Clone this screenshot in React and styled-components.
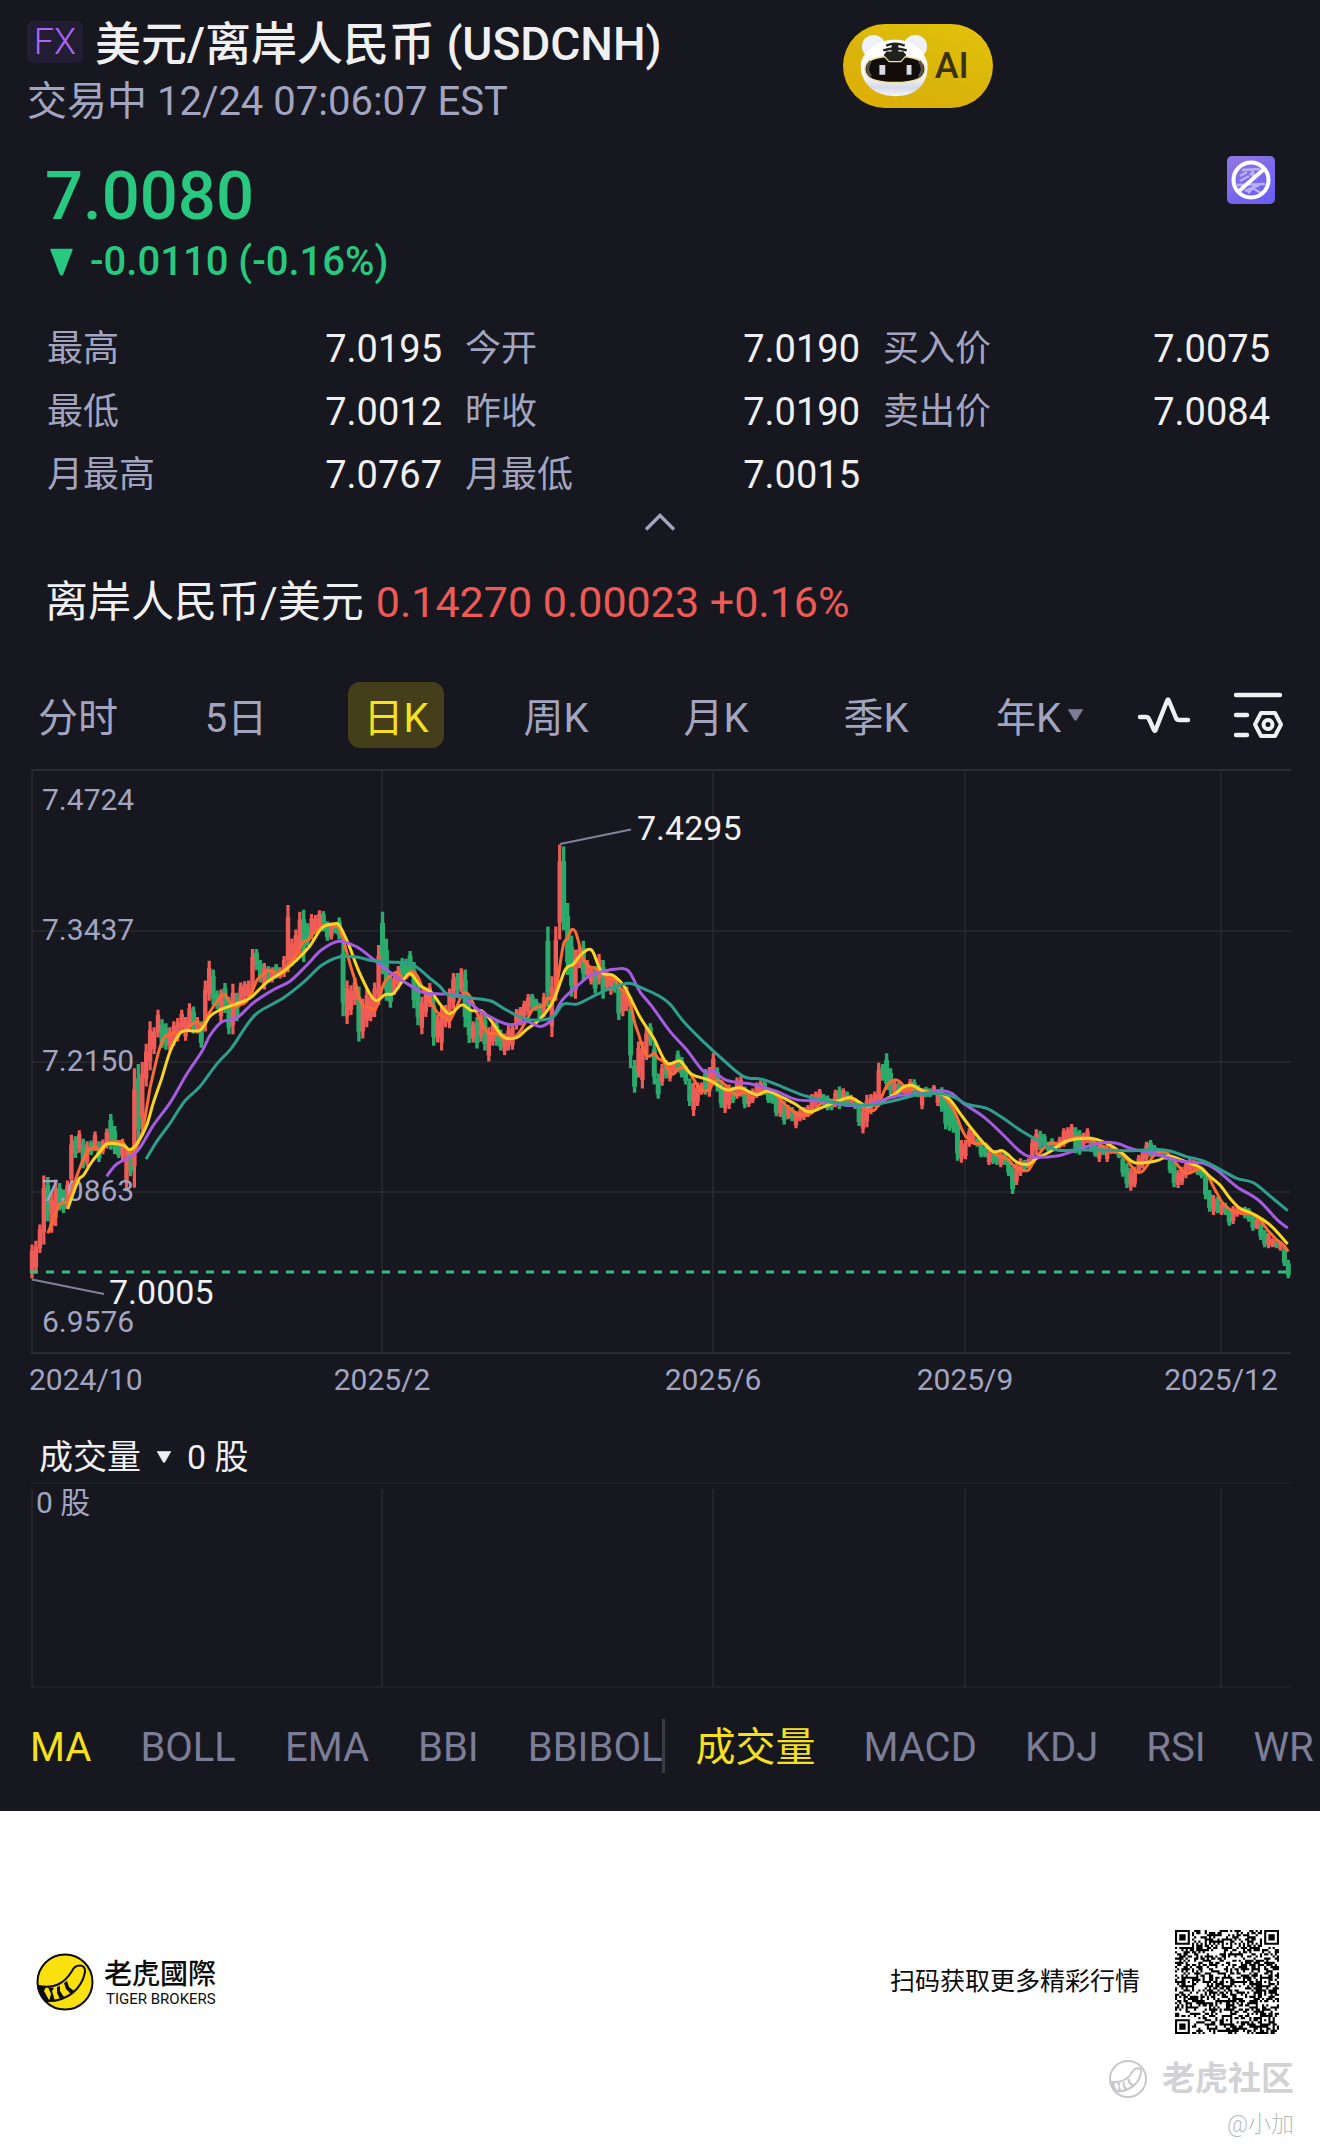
import React from "react";
import styled, { createGlobalStyle } from "styled-components";

const GlobalStyle = createGlobalStyle`
  *, *::before, *::after { box-sizing: border-box; }
  body {
    margin: 0;
    background: #ffffff;
    font-family: Roboto, "Noto Sans CJK SC", sans-serif;
  }
  button, select { font: inherit; color: inherit; background: none; border: 0; padding: 0; margin: 0; cursor: pointer; }
  h1, h2, p, dl, dd, dt { margin: 0; font-weight: inherit; font-size: inherit; }
`;

const color = {
  bg: "#16171f",
  text: "#f0f0f2",
  muted: "#a3a5c0",
  dim: "#7c7d96",
  up: "#ee5a55",
  down: "#28c880",
  candleUp: "#ef5b56",
  candleDown: "#2aab6c",
  accent: "#f7e01e",
  grid: "#2a2b30",
  faint: "#1e1f27",
};

/* ---------- Layout ---------- */

const Screen = styled.main`
  background: ${color.bg};
  color: ${color.text};
  padding: 15px 0 38px;
  overflow: hidden;
`;

const Header = styled.header`
  display: grid;
  grid-template-columns: 815fr 449fr;
  padding: 0 28px 0 27px;
`;

const TitleRow = styled.div`
  display: flex;
  align-items: center;
  gap: 12px;
`;

const MarketBadge = styled.span`
  width: 56px;
  height: 42px;
  margin-bottom: 4px;
  border-radius: 6px;
  background: #231d34;
  color: #a966f2;
  font-size: 36px;
  font-weight: 300;
  line-height: 42px;
  text-align: center;
`;

const Title = styled.h1`
  font-size: 46px;
  font-weight: 500;
  line-height: 58px;
  white-space: nowrap;
`;

const Status = styled.p`
  color: ${color.muted};
  font-size: 40px;
  line-height: 58px;
  white-space: nowrap;
`;

const AiButton = styled.button`
  display: flex;
  align-items: center;
  gap: 6px;
  width: 150px;
  height: 84px;
  margin-top: 9px;
  padding-left: 16px;
  border-radius: 42px;
  background: linear-gradient(20deg, #dfae08 0%, #d9b40a 45%, #e3c40c 100%);
  color: #3b3113;
  font-size: 36px;
  font-weight: 500;
`;

const Quote = styled.section`
  display: flex;
  justify-content: space-between;
  align-items: flex-start;
  padding: 25px 45px 0;
  color: ${color.down};
  font-weight: 500;
`;

const Price = styled.p`
  font-size: 67px;
  line-height: 80px;
`;

const Change = styled.p`
  display: flex;
  align-items: center;
  gap: 16px;
  padding-left: 4px;
  font-size: 40px;
  line-height: 52px;
`;

const IconButton = styled.button`
  display: block;
  line-height: 0;
`;

const Stats = styled.dl`
  display: grid;
  grid-template-columns: 395fr 395fr 387fr;
  column-gap: 23px;
  padding: 30px 50px 0 47px;
`;

const Stat = styled.div`
  display: flex;
  justify-content: space-between;
  line-height: 63px;
`;

const StatLabel = styled.dt`
  color: ${color.muted};
  font-size: 36px;
`;

const StatValue = styled.dd`
  font-size: 38px;
`;

const Collapse = styled.button`
  display: flex;
  align-items: center;
  justify-content: center;
  width: 100%;
  height: 30px;
`;

const CrossPair = styled.p`
  margin-top: 35px;
  padding: 0 45px;
  font-size: 43px;
  line-height: 60px;
  white-space: nowrap;
`;

const Rise = styled.span`
  margin-left: 12px;
  color: ${color.up};
`;

const Periods = styled.nav`
  display: grid;
  grid-template-columns: 156fr repeat(5, 160fr) 168fr 80fr 108fr;
  align-items: center;
  justify-items: center;
  height: 66px;
  margin-top: 50px;
  padding-right: 8px;
`;

const Period = styled.button`
  display: flex;
  align-items: center;
  gap: 6px;
  height: 66px;
  padding: 0 15px;
  border-radius: 12px;
  background: ${(p) => (p.$active ? "#443e1b" : "transparent")};
  color: ${(p) => (p.$active ? color.accent : color.muted)};
  font-size: 40px;
`;

const Plot = styled.svg`
  display: block;
  width: 100%;
  height: auto;
  margin-top: ${(p) => p.$gap || 0}px;
`;

const VolumeHead = styled.div`
  display: flex;
  align-items: center;
  gap: 15px;
  margin-top: 22px;
  padding: 0 39px;
  font-size: 34px;
  line-height: 50px;
`;

const VolumeSelect = styled.select`
  appearance: none;
  line-height: 50px;
`;

const Indicators = styled.nav`
  display: grid;
  grid-template-columns: 1fr 1fr;
  margin-top: 29px;
`;

const IndicatorGroup = styled.div`
  display: flex;
  gap: ${(p) => p.$gap}px;
  padding-left: 30px;
  border-left: ${(p) => (p.$divided ? "3px solid #3b3c43" : "0")};
  height: 54px;
`;

const Indicator = styled.button`
  flex: none;
  color: ${(p) => (p.$active ? color.accent : color.dim)};
  font-size: 40px;
  line-height: 58px;
`;

const Footer = styled.footer`
  padding: 119px 26px 0 36px;
  color: #0c0c0c;
`;

const FooterRow = styled.div`
  display: flex;
  align-items: center;
  padding-right: 15px;
`;

const Brand = styled.div`
  display: flex;
  align-items: center;
  gap: 10px;
  margin-right: auto;
`;

const BrandName = styled.p`
  font-family: "Noto Sans CJK TC", sans-serif;
  font-size: 28px;
  font-weight: 500;
  line-height: 34px;
`;

const BrandLatin = styled.p`
  padding-left: 2px;
  font-size: 15px;
  line-height: 20px;
`;

const Slogan = styled.p`
  margin-right: 35px;
  font-size: 25px;
  line-height: 36px;
`;

const Watermark = styled.div`
  display: flex;
  align-items: center;
  justify-content: flex-end;
  gap: 15px;
  margin-top: 22px;
  color: #d2d2d6;
  font-size: 33px;
  font-weight: 700;
  line-height: 46px;
`;

const Author = styled.p`
  color: #bcbcc0;
  font-size: 23px;
  font-weight: 300;
  line-height: 34px;
  margin-top: 6px;
  padding-bottom: 12px;
  text-align: right;
`;

/* ---------- Chart data: [top, bottom, direction] for each trading day ---------- */

const PITCH = 11.815;

const parse = (s) =>
  s.trim().split(/\s+/).map((t) => {
    const [a, b] = t.slice(0, -1).split("-").map(Number);
    return { top: a, bottom: b, up: t.endsWith("r") };
  });

const early = parse(`
1187-1270r 1178-1258r 1138-1208r 1018-1187r 1022-1130g 1060-1158r 1028-1142r 1036-1104g 1052-1110g 1030-1100r
918-1050r 922-975g 907-962r 928-1000g 934-996r 932-968g 910-958r 934-985g 930-966r 903-952r
867-955g 897-966g 938-975g 928-980r 950-1052r 952-1020g 755-1048r 745-940g 740-905r 695-800r
640-760r 655-720r 612-680r 635-705g 645-710g 655-712r 640-700r 632-690r 612-665r 630-688r
596-665r 604-670g 630-670r 640-705g 540-665r 492-590r 513-600g 565-610g 562-642r 546-620g
580-672g 548-672r 570-640g 545-600r 542-588r 540-588r 463-570r 463-515g 490-545g 497-562r
505-545g 508-545r 500-535g 508-535r 480-532r 355-520r 437-505r 415-495r 372-480r 367-495g
400-455g 377-440r 380-425r 368-415r 370-420g 395-443g 398-440r 398-425g 386-440g 440-628g
540-647r 552-625r 533-600r 555-690g 585-682r 560-655r 580-640r 545-630r 453-600r 372-525g
438-590g 530-607g 525-575r 505-560r 485-535g 487-530g 468-530g 495-608g 535-650g 580-672r
562-630r 546-605r 580-700g 625-692r 600-712r 600-655r 560-657r 522-610r 522-575g 510-570r
513-655g 590-693g 640-692r 630-707g 610-690r 620-712g 655-739r 640-700r 640-700g 660-712g
670-723r 650-712r 645-710r 610-660r 605-650r 590-635r 573-625r 573-610g 585-615g 595-640g
570-630r 408-605g 530-679r 408-590r 207-440r 212-417g 350-527g 430-580g 465-585r 453-510r
443-540g 490-535r 505-550r 505-572g 475-550r 490-585g 520-562r 525-575r 530-570g 550-637g
560-628r 555-615r 580-755g 735-815g 690-778r 690-805r 655-735r 645-700g 690-795g 768-830g
745-798r 735-780g 740-788r 740-768r 712-765g 728-778g 750-795g 780-848g 790-872r 790-848r
790-820r 757-820g 752-825r 718-795r 753-812g 790-852g 800-865r 795-855r 800-840g 778-830r
775-825r 800-853g 810-850r 805-840r 790-828r 785-822r 785-820g 805-840g 815-842g 820-873g
825-875r 835-893g 845-880r 850-885g 860-902r 855-885r 850-882r 845-875r 818-868r 812-850r
806-840r 818-845g 822-858g 830-858g 808-850r 800-855g 804-840r 812-850g 820-850r 828-855g
840-897g 850-915r 820-900r 818-868r 812-850r`);

const late = parse(`
308-440r 312-362g 280-390g 325-405g 360-415r 368-410g 375-400r 372-408r 357-405r 358-405g
375-412g 385-448r 380-412g 385-412g 375-405r 388-438r 382-455g 410-508g 430-512g 445-518g
480-602g 540-608r 540-598r 505-560r 512-548r 535-560g 545-592g 560-592g 570-615r 572-612g
570-615g 575-622r 575-615g 595-648g 620-702g 610-675r 595-648r 600-630g 595-625r 535-615r
508-585r 512-570g 522-560g 545-575g 535-575g 545-570r 530-565r 505-560r 502-545r 492-540r
502-580g 510-584g 518-560r 505-550r 530-575g 550-590g 550-606r 555-585g 555-606r 560-582r
565-582g 570-595g 585-650g 610-684g 625-692r 620-682r 585-640r 570-625r 545-605r 540-590g
555-590g 565-590r 570-590g 580-600g 590-640g 605-682g 630-684r 620-675r 605-655r 595-640r
600-630r 615-645g 620-655g 640-718g 690-755g 705-765r 710-760g 730-765r 728-765g 745-797g
738-792r 740-770r 745-765r 740-775g 745-785g 760-812g 775-808r 785-840g 810-862g 820-865r
835-862r 840-865g 845-872r 860-918g 900-955g`);

const yEarly = (v) => 760 + v / 2.45;
const yLate = (v) => 960 + v / 3;

const candles = [
  ...early.map((c) => ({ up: c.up, top: yEarly(c.top), bottom: yEarly(c.bottom) })),
  ...late.map((c) => ({ up: c.up, top: yLate(c.top), bottom: yLate(c.bottom) })),
].map((c, i) => ({ ...c, x: 32 + (i * PITCH) / 3 }));

const ma5 = candles.slice(4).map((c, i) => {
  const win = candles.slice(i, i + 5);
  return [c.x, win.reduce((s, w) => s + (w.top + w.bottom) / 2, 0) / 5];
});

const pairs = (s) => s.trim().split(/\s+/).map((p) => p.split(",").map(Number));
const series = (a, b, c) => [
  ...pairs(a).map(([x, y]) => [20 + x / 3, yEarly(y)]),
  ...pairs(b).map(([x, y]) => [440 + x / 3, yEarly(y)]),
  ...pairs(c).map(([x, y]) => [870 + x / 3, yLate(y)]),
];

const ma10 = series(
  "143,1100 175,1030 190,1018 215,985 240,960 262,940 310,944 330,955 355,935 380,895 400,840 425,780 450,715 475,675 495,663 540,662 570,628 600,612 640,600 690,583 740,545 790,518 830,490 870,455 905,412 940,402 958,405 985,450 1010,505 1035,550 1055,580 1072,590 1095,575 1120,572 1145,545 1170,523 1200,552 1235,570 1260,598",
  "28,622 65,600 95,614 125,615 150,635 190,678 230,680 260,660 300,635 340,590 375,515 400,500 425,475 455,466 485,520 520,528 555,558 600,630 640,680 680,742 720,738 755,770 810,785 860,808 900,803 950,820 985,812 1060,840 1105,862 1150,850 1220,828 1245,832 1280,848",
  "20,430 70,405 100,382 125,376 165,395 215,402 245,425 270,460 300,500 340,548 370,575 400,573 440,606 475,613 500,595 540,575 590,543 660,535 710,550 755,578 795,608 860,602 895,588 930,598 960,610 990,622 1020,650 1050,675 1080,715 1110,745 1150,762 1200,795 1253,852"
);
const ma20 = series(
  "260,1020 290,990 350,960 400,895 450,840 500,770 545,715 570,675 605,642 650,632 700,595 760,563 810,542 860,503 905,465 957,444 1010,458 1060,488 1110,520 1150,542 1210,570 1260,573",
  "65,578 120,615 205,648 260,640 300,653 335,635 365,590 410,555 450,528 490,518 530,512 565,516 600,568 635,603 690,665 740,710 790,762 820,762 860,785 940,795 1010,812 1070,832 1150,836 1220,846 1280,846",
  "10,430 80,408 160,400 215,392 245,400 280,430 340,470 400,525 445,570 480,590 560,588 620,570 690,548 740,550 790,568 850,580 930,603 1000,610 1040,630 1100,680 1165,720 1220,778 1253,804"
);
const ma30 = series(
  "378,978 410,935 450,890 495,835 540,800 590,745 635,705 680,650 715,618 790,583 850,545 905,503 960,482 1010,483 1060,492 1110,495 1175,500 1230,535 1260,555",
  "25,575 80,582 150,590 200,613 260,635 320,635 345,625 370,598 410,598 450,583 500,563 540,552 570,547 610,560 650,575 690,598 730,640 790,690 850,735 910,775 970,783 1030,802 1100,824 1180,838 1250,845",
  "10,435 80,420 150,403 220,402 260,415 290,433 350,445 400,475 450,510 510,545 560,570 630,570 700,570 780,572 850,568 900,573 950,590 1000,603 1050,628 1100,655 1150,668 1200,708 1253,752"
);

/* Catmull-Rom curve through the points */
const curve = (pts) => {
  let d = `M${pts[0][0].toFixed(1)} ${pts[0][1].toFixed(1)}`;
  for (let i = 0; i < pts.length - 1; i++) {
    const p0 = pts[i - 1] || pts[i];
    const p1 = pts[i];
    const p2 = pts[i + 1];
    const p3 = pts[i + 2] || p2;
    const c = [
      p1[0] + (p2[0] - p0[0]) / 6, p1[1] + (p2[1] - p0[1]) / 6,
      p2[0] - (p3[0] - p1[0]) / 6, p2[1] - (p3[1] - p1[1]) / 6,
      p2[0], p2[1],
    ].map((n) => n.toFixed(1));
    d += `C${c.join(" ")}`;
  }
  return d;
};

/* Thin wick over the whole range, wider body over the middle of it */
const bars = (up, inset) =>
  candles.filter((c) => c.up === up)
    .map((c) => {
      const trim = (c.bottom - c.top) * inset;
      return `M${c.x.toFixed(1)} ${(c.top + trim).toFixed(1)}V${(c.bottom - trim).toFixed(1)}`;
    })
    .join("");

const gridX = [32, 382, 713, 965, 1221];
const gridY = [931, 1062, 1192];
const priceLabels = [[810, "7.4724"], [940, "7.3437"], [1071, "7.2150"], [1201, "7.0863"], [1332, "6.9576"]];
const dateLabels = [[29, "2024/10", "start"], [382, "2025/2", "middle"], [713, "2025/6", "middle"], [965, "2025/9", "middle"], [1221, "2025/12", "middle"]];

function PriceChart() {
  return (
    <Plot $gap={12} viewBox="0 760 1320 650" role="img" aria-label="USDCNH 日K">
      <g stroke={color.grid} strokeWidth="2" fill="none">
        <path d="M31 770H1291M31 1353H1291" />
        <path strokeWidth="1.5" d={gridY.map((y) => `M31 ${y}H1291`).join("")} />
        <path strokeWidth="1.5" d={gridX.map((x) => `M${x} 770V1352`).join("")} />
      </g>
      <path d={bars(false, 0)} stroke={color.candleDown} strokeWidth="3.4" />
      <path d={bars(true, 0)} stroke={color.candleUp} strokeWidth="3.2" />
      <path d={bars(false, 0.18)} stroke={color.candleDown} strokeWidth="5" />
      <path d={bars(true, 0.18)} stroke={color.candleUp} strokeWidth="4.4" />
      <g fill={color.muted} fontSize="30">
        {priceLabels.map(([y, t]) => <text key={t} x="42" y={y}>{t}</text>)}
        {dateLabels.map(([x, t, anchor]) => <text key={t} x={x} y="1390" textAnchor={anchor}>{t}</text>)}
      </g>
      <g fill="none" strokeWidth="3" strokeLinejoin="round">
        <path d={curve(ma5)} stroke="#fb6a35" />
        <path d={curve(ma10)} stroke="#fbd424" />
        <path d={curve(ma20)} stroke="#a65ce0" />
        <path d={curve(ma30)} stroke="#2f9f8d" />
      </g>
      <path d="M30 1272H1288" stroke="#3db881" strokeWidth="3" strokeDasharray="8 8" />
      <path d="M560 844L631 829.500M32 1279.500L104 1294" stroke="#82839b" strokeWidth="1.8" />
      <g fill={color.text} fontSize="34">
        <text x="637" y="840">7.4295</text>
        <text x="109" y="1304">7.0005</text>
      </g>
    </Plot>
  );
}

function VolumeChart() {
  return (
    <Plot viewBox="0 1483 1320 208" role="img" aria-label="成交量">
      <path d="M31 1484H1291M31 1688H1291" stroke={color.faint} strokeWidth="2" />
      <path d={gridX.map((x) => `M${x} 1490V1688`).join("")} stroke={color.grid} strokeWidth="1.5" />
      <text x="36" y="1514" fill={color.muted} fontSize="30">0 股</text>
    </Plot>
  );
}

/* ---------- Icons ---------- */

const Caret = ({ w, h, fill }) => (
  <svg width={w} height={h} viewBox="0 0 20 20" preserveAspectRatio="none" aria-hidden="true">
    <path d="M1.500 1H18.500L11 18.500Q10 20 9 18.500Z" fill={fill} stroke={fill} strokeLinejoin="round" />
  </svg>
);

const TigerBot = () => (
  <svg width="70" height="66" viewBox="0 0 72 66" aria-hidden="true">
    <defs>
      <linearGradient id="fur" x1="0" y1="0" x2="0" y2="1">
        <stop offset="0.6" stopColor="#ffffff" />
        <stop offset="0.85" stopColor="#d5d9ea" />
        <stop offset="1" stopColor="#f5f6fb" />
      </linearGradient>
    </defs>
    <circle cx="15" cy="13" r="12" fill="#eef1f8" />
    <circle cx="58" cy="13" r="12" fill="#eef1f8" />
    <path d="M37 6C52 6 66 14 70 29C73 47 62 64 37 64C12 64 0 47 2 29C7 14 22 6 37 6Z" fill="url(#fur)" />
    <path d="M6 36C6 26 18 23 37 23C56 23 68 26 68 36C68 46 56 50 37 50C18 50 6 46 6 36Z" fill="#130d0a" stroke="#efe6a0" strokeWidth="1.500" />
    <path d="M12 28C8 33 8 39 12 44M62 28C66 33 66 39 62 44" fill="none" stroke="#575057" strokeWidth="3" />
    <path d="M26 22L31 28H43L48 22L46 18H28Z" fill="#20201d" />
    <path d="M26 23L31 28.500H43L48 23" fill="none" stroke="#efe6a0" strokeWidth="1.200" />
    <path d="M28 12Q37 8 47 12M25 17Q37 13 49 17M26 22Q37 17 48 22" fill="none" stroke="#20201d" strokeWidth="2.500" />
    <path d="M37 10V25" stroke="#20201d" strokeWidth="7" />
    <path d="M21 32H27V42H21ZM49 32H54V42H49Z" fill="#d9dbe3" />
  </svg>
);

const NoStripes = () => (
  <svg width="48" height="48" viewBox="0 0 48 48" aria-hidden="true">
    <defs>
      <linearGradient id="violet" x1="0" y1="0" x2="0.6" y2="1">
        <stop offset="0" stopColor="#9278e4" />
        <stop offset="1" stopColor="#6d5ff0" />
      </linearGradient>
    </defs>
    <rect width="48" height="48" rx="5" fill="url(#violet)" />
    <path d="M15 14L33 13M13 20L20 16M13 25L22 20M23 17L26 20M10 29L38 28M18 35L32 29M21 37L28 30M27 33L34 37M25 13L27 20" stroke="#b9b1f6" strokeWidth="2.500" fill="none" />
    <circle cx="24" cy="24" r="17.500" fill="none" stroke="#fff" strokeWidth="4" />
    <path d="M11.500 35.500L36.500 13.500" stroke="#fff" strokeWidth="4" />
  </svg>
);

const Wave = () => (
  <svg width="54" height="38" viewBox="0 0 54 38" fill="none" stroke={color.text} strokeWidth="4.400" strokeLinecap="round" strokeLinejoin="round" aria-hidden="true">
    <path d="M3 21H9Q11 21 12 23L17 34Q18 36 19 33L30 5Q31 2 32 5L39 22Q40 24 42 24H51" />
  </svg>
);

const ChartSettings = () => (
  <svg width="52" height="50" viewBox="0 0 52 50" fill="none" stroke={color.text} strokeWidth="4.400" strokeLinecap="round" strokeLinejoin="round" aria-hidden="true">
    <path d="M4 5H48M4 25H15M4 45H15" />
    <path d="M29 23H43L49 34.500L43 46H29L23 34.500Z" strokeWidth="4" />
    <circle cx="36" cy="34.500" r="4.500" strokeWidth="4" />
  </svg>
);

const TailMark = ({ size, fill, ink, width, stroke }) => (
  <svg width={size} height={size} viewBox="0 0 58 58" aria-hidden="true">
    <circle cx="29" cy="29" r="27.500" fill={fill} stroke={ink} strokeWidth={width} />
    <path d="M2 33C18 36 28 31 36 18C39 11 50 10 49 19C46 35 32 49 10 48" fill="none" stroke={ink} strokeWidth={stroke} strokeLinecap="round" />
    <path d="M2 32L10 34L8 38L13 47L9 48C5 44 3 39 2 32ZM12 34L18 35L16 38L19 48L13 48L15 41ZM21 34L24 33L24 38L28 44L24 46L21 40ZM28 30L31 28L33 34L38 38L35 41L30 36Z" fill={ink} />
  </svg>
);

/* ---------- QR code ---------- */

const QR_SIZE = 49;

const qrPath = (() => {
  const ring = (x, y, cx, cy, radii) => {
    const r = Math.max(Math.abs(x - cx), Math.abs(y - cy));
    return r <= radii.reach ? { dark: radii.dark.includes(r) } : null;
  };
  const finders = [[3, 3], [45, 3], [3, 45]];
  const aligns = [[24, 6], [6, 24], [24, 24], [42, 24], [24, 42], [42, 42]];
  let seed = 20251224;
  let d = "";
  for (let y = 0; y < QR_SIZE; y++) {
    for (let x = 0; x < QR_SIZE; x++) {
      seed = (Math.imul(seed, 1664525) + 1013904223) >>> 0;
      let dark = (seed >>> 16) % 100 < 50;
      if (x === 6 || y === 6) dark = (x + y) % 2 === 0;
      for (const [cx, cy] of aligns) {
        const hit = ring(x, y, cx, cy, { reach: 2, dark: [0, 2] });
        if (hit) dark = hit.dark;
      }
      for (const [cx, cy] of finders) {
        const hit = ring(x, y, cx, cy, { reach: 4, dark: [0, 1, 3] });
        if (hit) dark = hit.dark;
      }
      if (dark) d += `M${x} ${y}h1v1h-1z`;
    }
  }
  return d;
})();

const QrCode = () => (
  <svg width="104" height="104" viewBox={`0 0 ${QR_SIZE} ${QR_SIZE}`} role="img" aria-label="QR">
    <path d={qrPath} fill="#000" />
  </svg>
);

/* ---------- Page ---------- */

const stats = [
  ["最高", "7.0195"], ["今开", "7.0190"], ["买入价", "7.0075"],
  ["最低", "7.0012"], ["昨收", "7.0190"], ["卖出价", "7.0084"],
  ["月最高", "7.0767"], ["月最低", "7.0015"],
];
const periods = ["分时", "5日", "日K", "周K", "月K", "季K", "年K"];
const overlays = ["MA", "BOLL", "EMA", "BBI", "BBIBOL"];
const studies = ["成交量", "MACD", "KDJ", "RSI", "WR"];

export default function App() {
  return (
    <>
      <GlobalStyle />
      <Screen>
        <Header>
          <div>
            <TitleRow>
              <MarketBadge>FX</MarketBadge>
              <Title>美元/离岸人民币 (USDCNH)</Title>
            </TitleRow>
            <Status>交易中 12/24 07:06:07 EST</Status>
          </div>
          <AiButton type="button"><TigerBot />AI</AiButton>
        </Header>

        <Quote>
          <div>
            <Price>7.0080</Price>
            <Change><Caret w={25} h={28} fill={color.down} />-0.0110 (-0.16%)</Change>
          </div>
          <IconButton type="button" aria-label="隐藏"><NoStripes /></IconButton>
        </Quote>

        <Stats>
          {stats.map(([label, value]) => (
            <Stat key={label}>
              <StatLabel>{label}</StatLabel>
              <StatValue>{value}</StatValue>
            </Stat>
          ))}
        </Stats>
        <Collapse type="button" aria-label="收起">
          <svg width="32" height="20" viewBox="0 0 32 20" fill="none" stroke={color.muted} strokeWidth="3.400" aria-hidden="true">
            <path d="M2 17.500L16 3.500L30 17.500" />
          </svg>
        </Collapse>

        <CrossPair>离岸人民币/美元<Rise>0.14270 0.00023 +0.16%</Rise></CrossPair>

        <Periods>
          {periods.map((p) => (
            <Period key={p} type="button" $active={p === "日K"}>
              {p}
              {p === "年K" && <Caret w={17} h={12} fill={color.dim} />}
            </Period>
          ))}
          <IconButton type="button" aria-label="画线"><Wave /></IconButton>
          <IconButton type="button" aria-label="设置"><ChartSettings /></IconButton>
        </Periods>

        <PriceChart />

        <VolumeHead>
          <VolumeSelect aria-label="指标" defaultValue="成交量">
            <option>成交量</option>
          </VolumeSelect>
          <Caret w={16} h={12} fill={color.text} />
          <span>0 股</span>
        </VolumeHead>
        <VolumeChart />

        <Indicators>
          <IndicatorGroup $gap={49}>
            {overlays.map((t) => <Indicator key={t} type="button" $active={t === "MA"}>{t}</Indicator>)}
          </IndicatorGroup>
          <IndicatorGroup $gap={48} $divided>
            {studies.map((t) => <Indicator key={t} type="button" $active={t === "成交量"}>{t}</Indicator>)}
          </IndicatorGroup>
        </Indicators>
      </Screen>

      <Footer>
        <FooterRow>
          <Brand>
            <TailMark size={58} fill="#fbe00f" ink="#0c0c0c" width={2} stroke={2} />
            <div>
              <BrandName>老虎國際</BrandName>
              <BrandLatin>TIGER BROKERS</BrandLatin>
            </div>
          </Brand>
          <Slogan>扫码获取更多精彩行情</Slogan>
          <QrCode />
        </FooterRow>
        <Watermark>
          <TailMark size={38} fill="none" ink="#c8c8cc" width={3} stroke={3} />
          老虎社区
        </Watermark>
        <Author>@小加</Author>
      </Footer>
    </>
  );
}
